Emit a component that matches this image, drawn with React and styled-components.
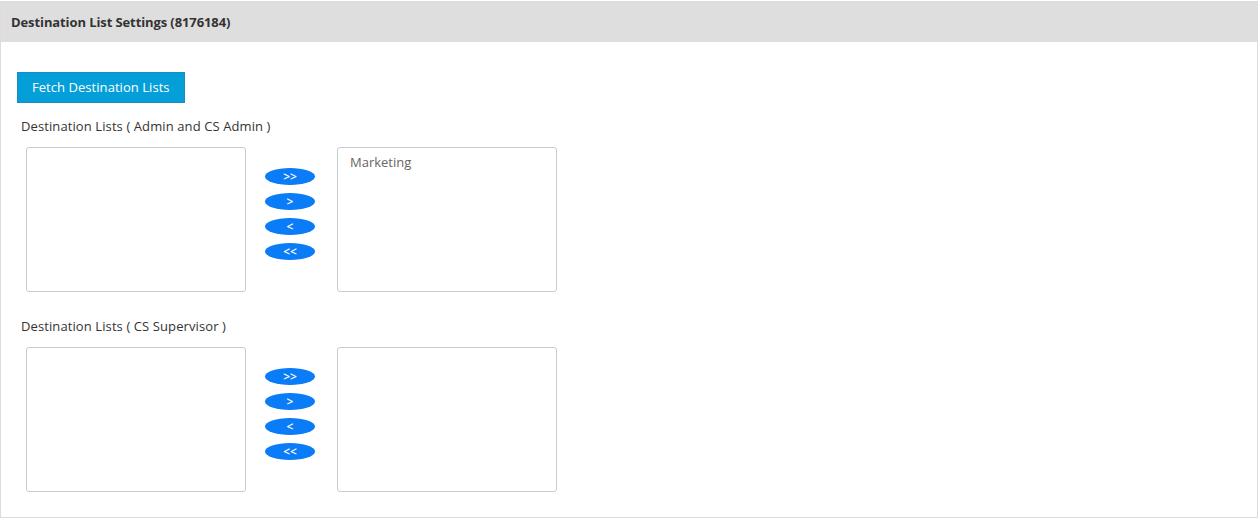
import React from "react";
import styled, { createGlobalStyle } from "styled-components";

const GlobalStyle = createGlobalStyle`
  html, body {
    margin: 0;
    padding: 0;
    background: #fff;
    font-family: "Open Sans", "Liberation Sans", sans-serif;
  }
`;

const Panel = styled.div`
  margin-top: 1px;
  width: 1258px;
  height: 517px;
  box-sizing: border-box;
  border: 1px solid #dcdcdc;
  background: #fff;
`;

const PanelHeader = styled.div`
  height: 40px;
  background: #dedede;
  display: flex;
  align-items: center;
  padding-left: 10px;
  font-size: 13px;
  font-weight: 700;
  letter-spacing: -0.1px;
  color: #333;
`;

const PanelBody = styled.div`
  padding: 30px 16px 0;
`;

const FetchButton = styled.button`
  height: 31px;
  padding: 0 14px 1px;
  background: #049fd9;
  border: 1px solid #1a8cbf;
  border-radius: 0;
  color: #fff;
  font-family: inherit;
  font-size: 13px;
  letter-spacing: 0.05px;
  cursor: pointer;
`;

const Section = styled.div`
  margin-top: ${(p) => p.$top}px;
`;

const Label = styled.div`
  padding-left: 4px;
  font-size: 13px;
  line-height: 18px;
  letter-spacing: 0.1px;
  color: #333;
`;

const Picker = styled.div`
  display: flex;
  align-items: flex-start;
  margin-top: 12px;
  padding-left: 9px;
`;

const ListBox = styled.div`
  width: 220px;
  height: 145px;
  box-sizing: border-box;
  border: 1px solid #c4ccd4;
  border-radius: 3px;
  padding: 5px 12px;
  font-size: 13px;
  color: #666;
`;

const Arrows = styled.div`
  display: flex;
  flex-direction: column;
  gap: 8px;
  margin: 21px 22px 0 19px;
`;

const ArrowButton = styled.button`
  width: 50px;
  height: 17px;
  padding: 0;
  border: none;
  border-radius: 50%;
  background: #0a7cf7;
  color: #fff;
  font-family: inherit;
  font-size: 12px;
  font-weight: 600;
  line-height: 17px;
  cursor: pointer;
`;

function DualList({ items }) {
  return (
    <Picker>
      <ListBox />
      <Arrows>
        <ArrowButton>&gt;&gt;</ArrowButton>
        <ArrowButton>&gt;</ArrowButton>
        <ArrowButton>&lt;</ArrowButton>
        <ArrowButton>&lt;&lt;</ArrowButton>
      </Arrows>
      <ListBox>
        {items.map((item) => (
          <div key={item}>{item}</div>
        ))}
      </ListBox>
    </Picker>
  );
}

export default function App() {
  return (
    <>
      <GlobalStyle />
      <Panel>
        <PanelHeader>Destination List Settings (8176184)</PanelHeader>
        <PanelBody>
          <FetchButton>Fetch Destination Lists</FetchButton>
          <Section $top={14}>
            <Label>Destination Lists ( Admin and CS Admin )</Label>
            <DualList items={["Marketing"]} />
          </Section>
          <Section $top={25}>
            <Label>Destination Lists ( CS Supervisor )</Label>
            <DualList items={[]} />
          </Section>
        </PanelBody>
      </Panel>
    </>
  );
}
